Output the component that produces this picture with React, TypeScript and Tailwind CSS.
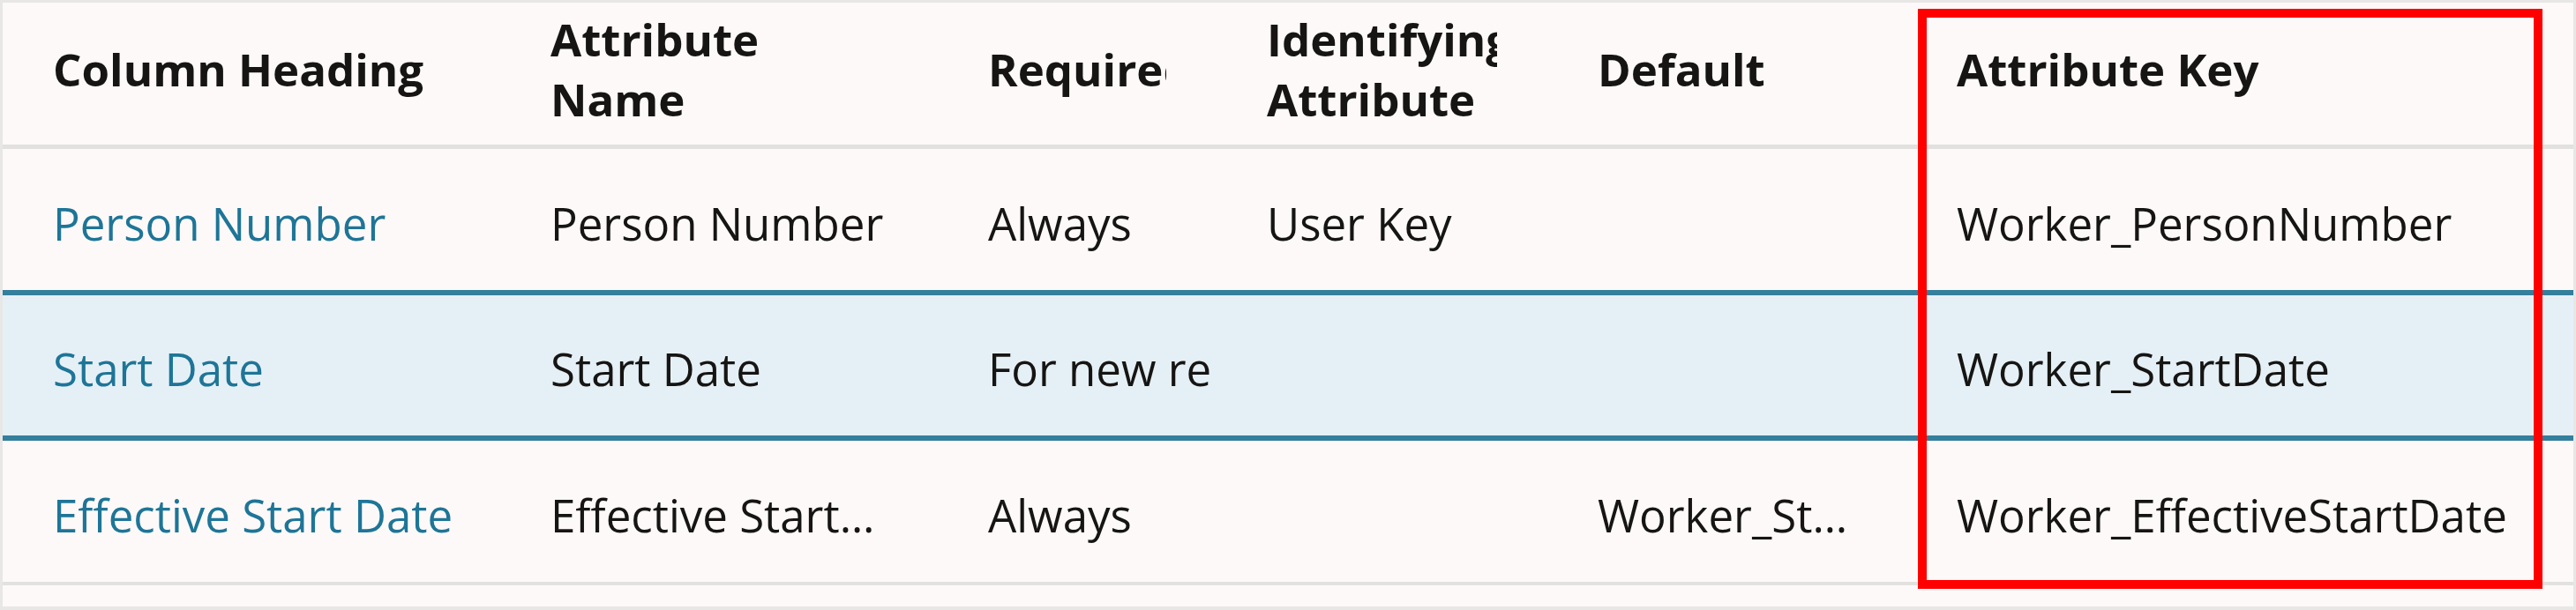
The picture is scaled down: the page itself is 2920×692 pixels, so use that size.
type Row = {
  heading: string;
  name: string;
  required: string;
  identifying: string;
  fallback: string;
  attrKey: string;
  selected?: boolean;
};

const rows: Row[] = [
  {
    heading: 'Person Number',
    name: 'Person Number',
    required: 'Always',
    identifying: 'User Key',
    fallback: '',
    attrKey: 'Worker_PersonNumber',
  },
  {
    heading: 'Start Date',
    name: 'Start Date',
    required: 'For new records',
    identifying: '',
    fallback: '',
    attrKey: 'Worker_StartDate',
    selected: true,
  },
  {
    heading: 'Effective Start Date',
    name: 'Effective Start Date',
    required: 'Always',
    identifying: '',
    fallback: 'Worker_StartDate',
    attrKey: 'Worker_EffectiveStartDate',
  },
];

const cols = 'grid grid-cols-[564px_496px_316px_375px_407px_1fr]';

export default function App() {
  return (
    <div className="relative h-[692px] w-[2920px] overflow-hidden bg-[#fcf9f8] font-['Open_Sans',sans-serif] text-[51px] text-[#161513]">
      <div className="h-full border-[3px] border-b-4 border-[#e8e7e6]">
        {/* Header */}
        <div className={`${cols} h-[166px] border-b-[5px] border-[#e3e1df] pb-[12px] font-bold leading-[68px]`}>
          <div className="flex items-center overflow-hidden px-[57px]">Column Heading</div>
          <div className="flex items-center overflow-hidden px-[57px]">
            <div>
              <div>Attribute</div>
              <div>Name</div>
            </div>
          </div>
          <div className="flex items-center px-[57px]">
            <div className="overflow-hidden whitespace-nowrap">Required</div>
          </div>
          <div className="flex items-center px-[57px]">
            <div className="overflow-hidden whitespace-nowrap">
              <div>Identifying</div>
              <div>Attribute</div>
            </div>
          </div>
          <div className="flex items-center overflow-hidden px-[57px]">Default</div>
          <div className="flex items-center overflow-hidden px-[57px]">Attribute Key</div>
        </div>

        {/* Rows */}
        {rows.map((r, i) => {
          const next = rows[i + 1];
          const teal = r.selected || next?.selected;
          return (
            <div
              key={r.attrKey}
              className={`${cols} ${r.selected ? 'h-[165px] bg-[#e5f0f6]' : i === 2 ? 'h-[164px]' : 'h-[166px]'} ${
                teal ? 'border-b-[6px] border-[#337f9c]' : 'border-b-4 border-[#e3e1df]'
              } pt-[8px] whitespace-nowrap`}
            >
              <div className="flex items-center overflow-hidden pl-[57px] text-[#1e7597]">{r.heading}</div>
              <div className="flex items-center overflow-hidden pr-[61px] pl-[57px]">
                <span className="truncate">{r.name}</span>
              </div>
              <div className="flex items-center pr-[4px] pl-[57px]">
                <div className="overflow-hidden">{r.required}</div>
              </div>
              <div className="flex items-center overflow-hidden px-[57px]">
                <span className="truncate">{r.identifying}</span>
              </div>
              <div className="flex items-center overflow-hidden px-[57px]">
                <span className="truncate">{r.fallback}</span>
              </div>
              <div className="flex items-center overflow-hidden px-[57px]">
                <span className="truncate">{r.attrKey}</span>
              </div>
            </div>
          );
        })}
      </div>

      {/* Red highlight around the Attribute Key column */}
      <div className="pointer-events-none absolute top-[10px] left-[2174px] h-[658px] w-[708px] border-[10px] border-[#ff0000]" />
    </div>
  );
}
